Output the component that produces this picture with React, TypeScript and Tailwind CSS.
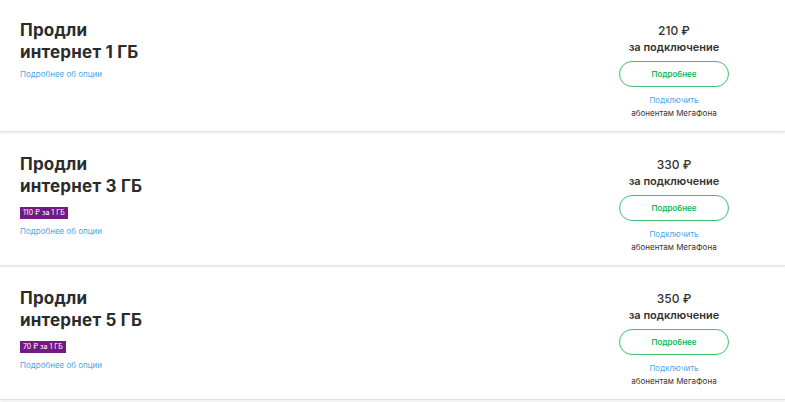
const OPTIONS = [
  { gb: 1, price: 210, badge: null },
  { gb: 3, price: 330, badge: "110 ₽ за 1 ГБ" },
  { gb: 5, price: 350, badge: "70 ₽ за 1 ГБ" },
];

export default function App() {
  return (
    <div className="flex min-h-screen w-full flex-col gap-[2px] bg-white font-['Inter',sans-serif] text-[#333]">
      {OPTIONS.map((option) => (
        <OptionCard key={option.gb} {...option} />
      ))}
    </div>
  );
}

function OptionCard({ gb, price, badge }: { gb: number; price: number; badge: string | null }) {
  return (
    <section className="flex h-[132px] justify-between border-b border-[#e3e3e3] bg-white shadow-[0_2px_3px_rgba(0,0,0,0.07)]">
      <div className="pl-5 pt-[19px]">
        <h2 className="text-[17px] font-bold leading-[22px] tracking-[0.2px] text-[#2b2b2b]">
          Продли
          <br />
          интернет {gb} ГБ
        </h2>
        {badge ? (
          <span className="mt-1 inline-flex h-3 items-center bg-[#731982] px-[3px] text-[7px] leading-none text-white">
            {badge}
          </span>
        ) : null}
        <a className={`block text-[8px] leading-[12px] text-[#4ba7e8] ${badge ? "mt-1" : "mt-[5px]"}`}>
          Подробнее об опции
        </a>
      </div>

      <div className="mr-[56px] flex w-[110px] flex-col items-center pt-[24px] text-center">
        <p className="text-[12px] font-medium leading-[14px]">{price} ₽</p>
        <p className="mt-[2px] text-[11px] font-semibold leading-[14px]">за подключение</p>
        <button
          type="button"
          className="mt-[7px] h-[26px] w-[110px] rounded-full border border-[#3cc36f] text-[8px] font-semibold text-[#10b64f]"
        >
          Подробнее
        </button>
        <a className="mt-[7px] text-[8px] leading-[12px] text-[#4ba7e8]">Подключить</a>
        <p className="mt-px text-[8px] leading-[12px] text-[#333]">абонентам МегаФона</p>
      </div>
    </section>
  );
}
